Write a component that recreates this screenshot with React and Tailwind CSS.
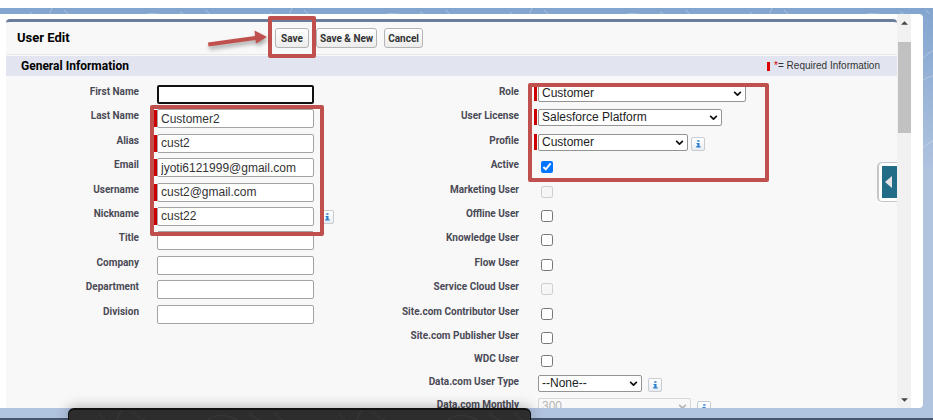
import React from "react";

const textFields = [
  { id: "firstName", label: "First Name", value: "", focused: true },
  { id: "lastName", label: "Last Name", value: "Customer2", required: true },
  { id: "alias", label: "Alias", value: "cust2", required: true },
  { id: "email", label: "Email", value: "jyoti6121999@gmail.com", required: true },
  { id: "username", label: "Username", value: "cust2@gmail.com", required: true },
  { id: "nickname", label: "Nickname", value: "cust22", required: true, info: true },
  { id: "title", label: "Title", value: "" },
  { id: "company", label: "Company", value: "" },
  { id: "department", label: "Department", value: "" },
  { id: "division", label: "Division", value: "" },
];

const accessFields = [
  { id: "role", label: "Role", option: "Customer", width: "w-[208px]", required: true },
  { id: "license", label: "User License", option: "Salesforce Platform", width: "w-[184px]", required: true },
  { id: "profile", label: "Profile", option: "Customer", width: "w-[150px]", required: true, info: true },
  { id: "active", label: "Active", checked: true },
  { id: "marketing", label: "Marketing User", disabled: true },
  { id: "offline", label: "Offline User" },
  { id: "knowledge", label: "Knowledge User" },
  { id: "flow", label: "Flow User" },
  { id: "serviceCloud", label: "Service Cloud User", disabled: true },
  { id: "contributor", label: "Site.com Contributor User" },
];

const moreFields = [
  { id: "publisher", label: "Site.com Publisher User" },
  { id: "wdc", label: "WDC User" },
  { id: "dataType", label: "Data.com User Type", option: "--None--", width: "w-[104px]", info: true },
  { id: "dataMonthly", label: "Data.com Monthly", option: "300", width: "w-[153px]", info: true, disabled: true },
];

function Contours({ className }) {
  return (
    <svg className={className} aria-hidden="true">
      <defs>
        <pattern id="contours" width="240" height="90" patternUnits="userSpaceOnUse">
          <g fill="none" stroke="#ffffff" strokeOpacity="0.3">
            <path d="M30 4q14 12 4 24M52 0q-4 12-14 18M64 2q10 12 30 10t24 16" />
            <path d="M128 22q12-20 30-16t16 18M150 20q10-12 18-2M180 4q16 10 34 20M206 2q10 16 30 12" />
            <path d="M0 50q20-20 50 0t60-6 60 12 70-6M0 72q30-16 60 0t60 0 60-6 60 6" />
          </g>
        </pattern>
      </defs>
      <rect width="100%" height="100%" fill="url(#contours)" />
    </svg>
  );
}

function InfoButton({ label }) {
  return (
    <button
      type="button"
      aria-label={`About ${label}`}
      className="flex h-[14px] w-[14px] shrink-0 items-center justify-center rounded-[2px] border border-[#c9ccd0] bg-gradient-to-b from-white to-[#e9edf2]"
    >
      <svg viewBox="0 0 8 10" className="h-[8px] w-[6px]" fill="#2a7fd0" aria-hidden="true">
        <rect x="3" y="0" width="3" height="2" />
        <path d="M2 3.5h4V8h1.500v1.500h-6V8H3V5H2z" />
      </svg>
    </button>
  );
}

function Label({ id, children }) {
  return (
    <label htmlFor={id} className="w-[133px] shrink-0 whitespace-nowrap text-right text-[10px] leading-[18px] font-bold text-[#4a4a56]">
      {children}
    </label>
  );
}

function TextRow({ field }) {
  return (
    <div className="flex min-h-0 items-start">
      <Label id={field.id}>{field.label}</Label>
      <div className="ml-[15px] flex items-start pt-[2px]">
        <span className={field.required ? "mt-px h-[17px] w-[3px] bg-[#c00]" : "h-[17px] w-[3px]"} />
        <input
          id={field.id}
          type="text"
          defaultValue={field.value}
          className={
            field.focused
              ? "h-[19px] w-[157px] rounded-[2px] border-2 border-[#101010] bg-white px-[3px] outline-none"
              : "h-[19px] w-[157px] rounded-[2px] border border-[#a3a3a3] bg-white px-[3px] font-['Liberation_Sans',Arial,sans-serif] text-[12px] text-[#333] outline-none"
          }
        />
        {field.info && (
          <span className="mt-[3px] ml-[6px]">
            <InfoButton label={field.label} />
          </span>
        )}
      </div>
    </div>
  );
}

function SelectControl({ field }) {
  return (
    <span className={`relative flex h-[17px] ${field.width}`}>
      <select
        id={field.id}
        disabled={field.disabled}
        className="h-full w-full appearance-none rounded-[2px] border border-[#949494] bg-white pl-[3px] font-['Liberation_Sans',Arial,sans-serif] text-[12px] leading-[15px] text-[#222] disabled:border-[#d8d8d8] disabled:bg-[#f8f8f8] disabled:text-[#b5b5b5] disabled:opacity-100"
      >
        <option>{field.option}</option>
      </select>
      <svg
        viewBox="0 0 10 6"
        className={
          field.disabled
            ? "pointer-events-none absolute top-[6px] right-[4px] h-[5px] w-[9px] text-[#b5b5b5]"
            : "pointer-events-none absolute top-[6px] right-[4px] h-[5px] w-[9px] text-[#111]"
        }
        fill="none"
        stroke="currentColor"
        strokeWidth="2"
        aria-hidden="true"
      >
        <path d="M1 1l4 4 4-4" />
      </svg>
    </span>
  );
}

function AccessRow({ field }) {
  return (
    <div className="flex min-h-0 items-start">
      <Label id={field.id}>{field.label}</Label>
      <div className="ml-[15px] flex items-start pt-[2px]">
        <span className={field.required ? "mr-px h-[16px] w-[3px] bg-[#c00]" : "mr-px h-[16px] w-[3px]"} />
        {field.option ? (
          <>
            <SelectControl field={field} />
            {field.info && (
              <span className={field.id === "profile" ? "mt-[3px] ml-[3px]" : "mt-[3px] ml-[6px]"}>
                <InfoButton label={field.label} />
              </span>
            )}
          </>
        ) : (
          <input
            id={field.id}
            type="checkbox"
            defaultChecked={field.checked}
            disabled={field.disabled}
            className="mt-[3px] ml-[3px] h-[12px] w-[12px]"
          />
        )}
      </div>
    </div>
  );
}

function ActionButton({ children }) {
  return (
    <button
      type="button"
      className="h-[20px] min-w-[34px] rounded-[3px] border border-[#b5b5b5] bg-gradient-to-b from-white to-[#ececec] px-[3px] text-[10px] whitespace-nowrap font-bold text-[#333]"
    >
      {children}
    </button>
  );
}

export default function App() {
  return (
    <div className="relative flex h-screen flex-col overflow-hidden bg-white pt-2 font-[Roboto,Arial,sans-serif]">
      <div className="relative flex min-h-0 flex-1 flex-col border-b-2 border-[#46546c] bg-gradient-to-b from-[#82a5cf] via-[#b0c3df] via-40% to-[#b0c3df] pt-[6px] pr-[10px] pb-[10px]">
        <Contours className="absolute top-0 left-0 h-[6px] w-full" />
        <Contours className="absolute top-0 right-0 h-[150px] w-[10px]" />
        <div className="relative flex min-h-0 flex-1 rounded-r-[4px] bg-white pr-3 pl-[6px]">
          <main className="relative min-w-0 flex-1 overflow-hidden pt-[5px]">
            <div className="rounded-t-[4px] border-t-[3px] border-[#6b7d9a] bg-[#f8f8f8]">
              <header className="grid h-[33px] grid-cols-[269fr_622fr] items-center border-b border-[#e8e8e8]">
                <h1 className="pl-[11px] text-[13px] font-bold text-black">User Edit</h1>
                <div className="flex gap-[7px]">
                  <span className="relative z-10 flex">
                    <ActionButton>Save</ActionButton>
                    <span className="pointer-events-none absolute -inset-x-[7px] -top-[12px] -bottom-[10px] rounded-[2px] border-4 border-[#c0504d]" />
                    <svg className="pointer-events-none absolute top-[2px] right-full mr-[6px] h-[24px] w-[64px] drop-shadow-[1px_3px_2px_rgba(0,0,0,0.35)]" viewBox="0 0 64 24" aria-hidden="true">
                      <path d="M3 12.500L50 6l-.5-5.500L62 7 51 13.500l-.5-3.500L3.500 16.500z" fill="#c0504d" />
                    </svg>
                  </span>
                  <ActionButton>Save &amp; New</ActionButton>
                  <ActionButton>Cancel</ActionButton>
                </div>
              </header>
              <div className="mt-px flex h-[20px] items-center justify-between bg-[#e2e5ef] pr-[17px] pl-[15px]">
                <h2 className="text-[12px] font-bold text-black">General Information</h2>
                <p className="flex items-center font-['Liberation_Sans',Arial,sans-serif] text-[10px] leading-4 text-[#333]">
                  <span className="mr-[4px] h-[9px] w-[3px] bg-[#d00]" />
                  <span className="text-[#c00]">*</span>= Required Information
                </p>
              </div>
              <form className="grid grid-cols-[380fr_511fr] items-start pt-[7px]">
                <div className="relative grid h-[244px] grid-rows-10">
                  {textFields.map((f) => (
                    <TextRow key={f.id} field={f} />
                  ))}
                  <span className="pointer-events-none absolute top-[22px] left-[144px] h-[131px] w-[174px] rounded-[2px] border-4 border-[#c0504d]" />
                </div>
                <div className="relative">
                  <div className="grid h-[244px] grid-rows-10">
                    {accessFields.map((f) => (
                      <AccessRow key={f.id} field={f} />
                    ))}
                  </div>
                  <div className="grid auto-rows-[23px]">
                    {moreFields.map((f) => (
                      <AccessRow key={f.id} field={f} />
                    ))}
                  </div>
                  <span className="pointer-events-none absolute top-0 left-[142px] h-[99px] w-[241px] rounded-[2px] border-4 border-[#c0504d]" />
                </div>
              </form>
            </div>
            <button
              type="button"
              aria-label="Open side panel"
              className="absolute top-[148px] right-0 h-[40px] w-[20px] rounded-l-[5px] border-y border-l-2 border-[#c4c7c9] bg-white py-[3px] pl-[3px]"
            >
              <span className="flex h-full items-center bg-[#236c88] pl-[3px]">
                <svg viewBox="0 0 7 12" className="h-[12px] w-[7px]" fill="#e6e6e6" aria-hidden="true">
                  <path d="M7 0v12L0 6z" />
                </svg>
              </span>
            </button>
          </main>
          <div className="flex w-[14px] flex-col items-center bg-[#f1f1f1] pt-[7px] pb-[6px]" aria-hidden="true">
            <svg viewBox="0 0 8 4" className="h-[4px] w-[7px]" fill="#444">
              <path d="M4 0l4 4H0z" />
            </svg>
            <span className="mt-[17px] h-[91px] w-[13px] bg-[#c1c1c1]" />
            <svg viewBox="0 0 8 4" className="mt-auto h-[4px] w-[7px]" fill="#444">
              <path d="M0 0h8L4 4z" />
            </svg>
          </div>
        </div>
      </div>
      <div className="absolute bottom-0 left-[68px] h-[12px] w-[463px] overflow-hidden rounded-t-[6px] border-x border-t-2 border-[#111] bg-[#2d2d2d] shadow-[0_0_14px_rgba(0,0,0,0.35)]">
        <Contours className="h-full w-full opacity-20" />
      </div>
    </div>
  );
}
